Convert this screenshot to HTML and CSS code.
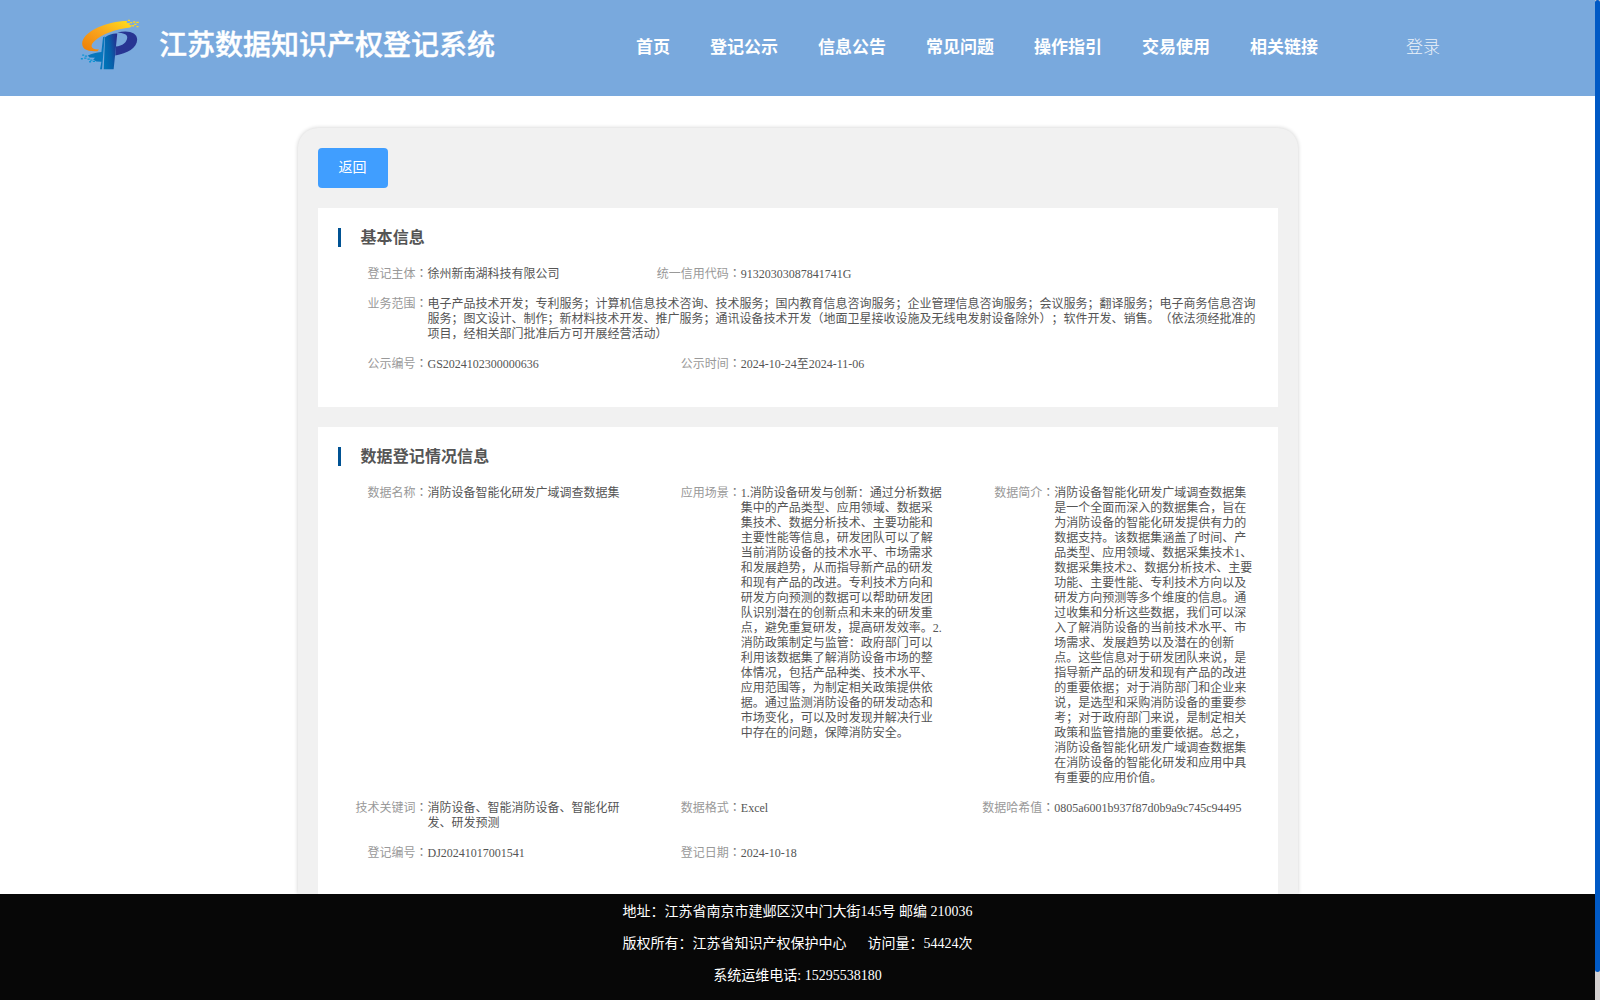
FILE: index.html
```html
<!DOCTYPE html>
<html lang="zh-CN">
<head>
<meta charset="utf-8">
<title>江苏数据知识产权登记系统</title>
<link rel="stylesheet" href="styles.css">
</head>
<body>
<div class="page">
  <header class="header">
    <svg class="logo" viewBox="60 55 180 160">
      <defs>
        <linearGradient id="gold" x1="0" y1="1" x2="1" y2="0"><stop offset="0" stop-color="#ee7d08"/><stop offset=".5" stop-color="#f9a51d"/><stop offset="1" stop-color="#ffe01b"/></linearGradient>
        <linearGradient id="stem" x1="0" y1=".7" x2="1" y2=".3"><stop offset="0" stop-color="#0074b8"/><stop offset=".5" stop-color="#0760aa"/><stop offset="1" stop-color="#252f8f"/></linearGradient>
      </defs>
      <path fill="url(#gold)" d="M190 64C130 69 67 98 66 132C66 149 81 157 112 155L117 150C91 151 88 137 105 123C126 105 168 88 211 84L218 78L208 76L211 71L200 70L202 64Z"/>
      <path fill="#ffd51d" d="M204 60h6v4h-6zM211 67h6v4h-6zM220 65h6v4h-6zM229 66h8v4h-8zM223 72h7v4h-7zM217 76h6v5h-6zM230 79h6v4h-6z"/>
      <path fill="#283593" d="M172 99C204 91 232 98 232 120C232 146 202 162 166 168L167 141C188 140 202 127 202 113C202 105 190 100 172 99Z"/>
      <path fill="url(#stem)" d="M135 113C148 105 158 101 172 102L168 141L161 210H131Z"/>
      <path fill="#0877bd" d="M83 168C95 163 109 160 124 158L129 113L134 111L126 210H120L124 187L109 186L99 180L105 175L88 174Z"/>
      <path fill="#0e94d3" d="M66 165h6v4h-6zM74 168h7v4h-7zM62 176h6v4h-6zM72 174h7v4h-7zM82 177h7v4h-7zM90 180h7v4h-7zM87 185h6v4h-6zM98 184h7v4h-7z"/>
    </svg>
    <h1 class="brand">江苏数据知识产权登记系统</h1>
    <nav class="nav"><a>首页</a><a>登记公示</a><a>信息公告</a><a>常见问题</a><a>操作指引</a><a>交易使用</a><a>相关链接</a></nav>
    <a class="login">登录</a>
  </header>

  <main class="panel">
    <button class="back">返回</button>
    <section class="card basic">
      <h2>基本信息</h2>
      <dl class="grid">
        <div class="item"><dt>登记主体<i lang="zh-TW">：</i></dt><dd>徐州新南湖科技有限公司</dd></div>
        <div class="item"><dt>统一信用代码<i lang="zh-TW">：</i></dt><dd>91320303087841741G</dd></div>
        <div class="item wide"><dt>业务范围<i lang="zh-TW">：</i></dt><dd>电子产品技术开发；专利服务；计算机信息技术咨询、技术服务；国内教育信息咨询服务；企业管理信息咨询服务；会议服务；翻译服务；电子商务信息咨询<br>服务；图文设计、制作；新材料技术开发、推广服务；通讯设备技术开发（地面卫星接收设施及无线电发射设备除外）；软件开发、销售。（依法须经批准的<br>项目，经相关部门批准后方可开展经营活动）</dd></div>
        <div class="item"><dt>公示编号<i lang="zh-TW">：</i></dt><dd>GS2024102300000636</dd></div>
        <div class="item"><dt>公示时间<i lang="zh-TW">：</i></dt><dd>2024-10-24至2024-11-06</dd></div>
      </dl>
    </section>
    <section class="card">
      <h2>数据登记情况信息</h2>
      <dl class="grid">
        <div class="item"><dt>数据名称<i lang="zh-TW">：</i></dt><dd>消防设备智能化研发广域调查数据集</dd></div>
        <div class="item"><dt>应用场景<i lang="zh-TW">：</i></dt><dd>1.消防设备研发与创新：通过分析数据<br>集中的产品类型、应用领域、数据采<br>集技术、数据分析技术、主要功能和<br>主要性能等信息，研发团队可以了解<br>当前消防设备的技术水平、市场需求<br>和发展趋势，从而指导新产品的研发<br>和现有产品的改进。专利技术方向和<br>研发方向预测的数据可以帮助研发团<br>队识别潜在的创新点和未来的研发重<br>点，避免重复研发，提高研发效率。2.<br>消防政策制定与监管：政府部门可以<br>利用该数据集了解消防设备市场的整<br>体情况，包括产品种类、技术水平、<br>应用范围等，为制定相关政策提供依<br>据。通过监测消防设备的研发动态和<br>市场变化，可以及时发现并解决行业<br>中存在的问题，保障消防安全。</dd></div>
        <div class="item"><dt>数据简介<i lang="zh-TW">：</i></dt><dd>消防设备智能化研发广域调查数据集<br>是一个全面而深入的数据集合，旨在<br>为消防设备的智能化研发提供有力的<br>数据支持。该数据集涵盖了时间、产<br>品类型、应用领域、数据采集技术1、<br>数据采集技术2、数据分析技术、主要<br>功能、主要性能、专利技术方向以及<br>研发方向预测等多个维度的信息。通<br>过收集和分析这些数据，我们可以深<br>入了解消防设备的当前技术水平、市<br>场需求、发展趋势以及潜在的创新<br>点。这些信息对于研发团队来说，是<br>指导新产品的研发和现有产品的改进<br>的重要依据；对于消防部门和企业来<br>说，是选型和采购消防设备的重要参<br>考；对于政府部门来说，是制定相关<br>政策和监管措施的重要依据。总之，<br>消防设备智能化研发广域调查数据集<br>在消防设备的智能化研发和应用中具<br>有重要的应用价值。</dd></div>
        <div class="item"><dt>技术关键词<i lang="zh-TW">：</i></dt><dd>消防设备、智能消防设备、智能化研<br>发、研发预测</dd></div>
        <div class="item"><dt>数据格式<i lang="zh-TW">：</i></dt><dd>Excel</dd></div>
        <div class="item"><dt>数据哈希值<i lang="zh-TW">：</i></dt><dd>0805a6001b937f87d0b9a9c745c94495</dd></div>
        <div class="item"><dt>登记编号<i lang="zh-TW">：</i></dt><dd>DJ20241017001541</dd></div>
        <div class="item"><dt>登记日期<i lang="zh-TW">：</i></dt><dd>2024-10-18</dd></div>
      </dl>
    </section>
  </main>

  <footer class="footer">
    <p>地址：江苏省南京市建邺区汉中门大街145号 邮编 210036</p>
    <p>版权所有：江苏省知识产权保护中心<span class="visits">访问量：54424次</span></p>
    <p>系统运维电话: 15295538180</p>
  </footer>
</div>
<div class="scrollbar"><div class="thumb"></div></div>
</body>
</html>
```
FILE: styles.css
```css
* { box-sizing: border-box; }
body {
  margin: 0;
  height: 1000px;
  overflow: hidden;
  display: flex;
  background: #fff;
  color: #555;
  font-family: "Liberation Serif", "Noto Sans CJK SC", serif;
  text-spacing-trim: space-all;
}
h1, h2, dl, dd, p { margin: 0; }
.page { width: 1595px; height: 1000px; display: flex; flex-direction: column; }

.header {
  flex: none;
  height: 96px;
  display: flex;
  align-items: center;
  background: #79a9dd;
  color: #fff;
}
.logo { width: 60px; height: 53px; margin: 0 19px 7px 80px; }
.brand { width: 336px; margin-bottom: 5px; font-size: 28px; line-height: 40px; font-weight: 500; white-space: nowrap; -webkit-text-stroke: .4px #fff; }
.nav { display: flex; gap: 40px; margin: 0 88px 0 141px; font-size: 17px; line-height: 24px; font-weight: bold; white-space: nowrap; }
.login { font-size: 17px; line-height: 24px; font-weight: 300; opacity: .85; }

.panel {
  flex: 1;
  min-height: 0;
  overflow: hidden;
  width: 1000px;
  margin: 32px auto 0;
  padding: 20px;
  background: #f1f1f1;
  border-radius: 20px 20px 0 0;
  box-shadow: 0 0 4px rgba(0, 0, 0, .2);
}
.back {
  display: block;
  width: 70px;
  height: 40px;
  margin-bottom: 20px;
  padding: 0;
  border: 0;
  border-radius: 4px;
  background: #409eff;
  color: #fff;
  font: 14px/20px "Liberation Serif", "Noto Sans CJK SC", serif;
}
.card { height: 600px; margin-bottom: 20px; padding: 20px; background: #fff; }
.basic { height: 199px; }
.card h2 {
  height: 19px;
  padding-left: 20px;
  border-left: 3px solid #005293;
  font-size: 16px;
  line-height: 20px;
  font-weight: bold;
  letter-spacing: .1px;
}
.grid { display: grid; grid-template-columns: repeat(3, 313.33px); row-gap: 15px; margin-top: 20px; margin-right: -20px; }
.item { display: flex; font-size: 12px; line-height: 15px; white-space: nowrap; }
.wide { grid-column: 1 / -1; }
dt { flex: none; width: 90px; height: 15px; text-align: right; color: #999; }
dt i { font-family: "Liberation Serif", "Noto Sans CJK TC", sans-serif; font-style: normal; color: #777; }

.footer { flex: none; height: 106px; padding-top: 2px; background: #070707; color: #fff; font-size: 14px; text-align: center; }
.footer p { height: 32px; line-height: 32px; }
.visits { margin-left: 21px; }

.scrollbar { width: 5px; height: 1000px; background: #d4d0d0; }
.thumb { height: 972px; border-radius: 3px; background: #0059c5; }
```
